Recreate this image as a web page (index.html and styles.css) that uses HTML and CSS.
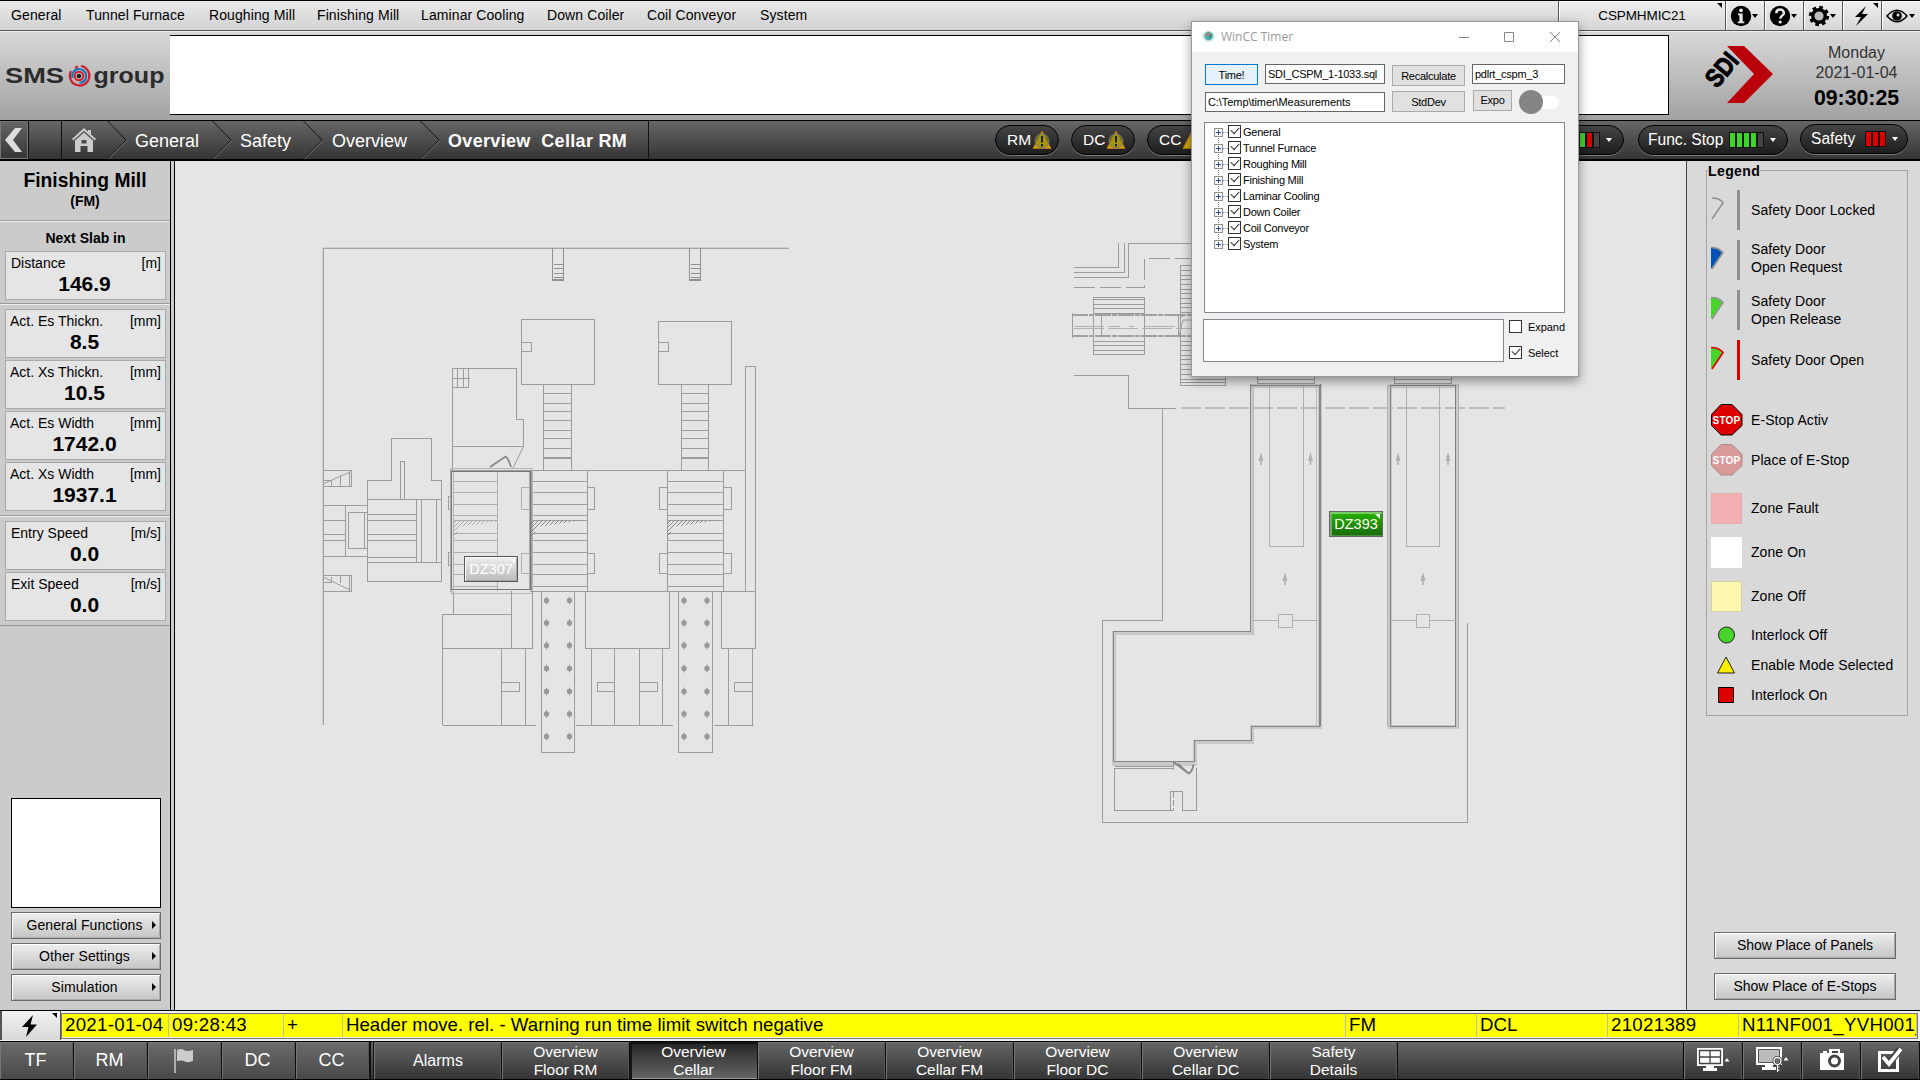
FILE: index.html
```html
<!DOCTYPE html>
<html lang="en">
<head>
<meta charset="utf-8">
<title>Overview Cellar RM</title>
<link rel="stylesheet" href="styles.css">
</head>
<body>
<div class="screen">
  <header class="menubar">
    <nav class="menu">
      <span>General</span><span>Tunnel Furnace</span><span>Roughing Mill</span><span>Finishing Mill</span><span>Laminar Cooling</span><span>Down Coiler</span><span>Coil Conveyor</span><span>System</span>
    </nav>
    <div class="tool station">CSPMHMIC21<i class="corner"></i></div>
    <div class="tool"><svg width="36" height="28" viewBox="0 0 36 28"><circle cx="15" cy="14" r="10.2"/><g fill="#e6e6e6"><circle cx="15" cy="8.3" r="1.9"/><path d="M12 11.5h4.7v8h1.6v1.7h-6.5v-1.7h1.6v-6.3H12z"/></g><path d="M26 12h6l-3 4z"/></svg></div>
    <div class="tool"><svg width="36" height="28" viewBox="0 0 36 28"><circle cx="15" cy="14" r="10.2"/><path d="M11.3 11.3c0-5.2 7.6-4.8 7.6-.4 0 2.8-3.6 2.7-3.6 5.8" fill="none" stroke="#e6e6e6" stroke-width="2.5"/><circle cx="15.2" cy="20" r="1.6" fill="#e6e6e6"/><path d="M26 12h6l-3 4z"/></svg></div>
    <div class="tool"><svg width="36" height="28" viewBox="0 0 36 28"><circle cx="15" cy="14" r="8.7" fill="none" stroke="#000" stroke-width="3" stroke-dasharray="3.6 3.23"/><circle cx="15" cy="14" r="6.3" fill="#bbb" stroke="#000" stroke-width="3.4"/><path d="M26 12h6l-3 4z"/></svg></div>
    <div class="tool"><svg width="36" height="28" viewBox="0 0 36 28"><path d="M23 4l-11 11 6 0-5 9 12-12-6 0z"/></svg><i class="corner"></i></div>
    <div class="tool"><svg width="36" height="28" viewBox="0 0 36 28"><path d="M5 14q10-11.500 20 0q-10 11.500-20 0z" fill="none" stroke="#000" stroke-width="1.600"/><circle cx="15" cy="14" r="4.800"/><circle cx="16" cy="13" r="1.500" fill="#ddd"/><path d="M27 12h6l-3 4z"/></svg></div>
  </header>

  <section class="banner">
    <div class="brand"><svg width="170" height="88" viewBox="0 32 170 88">
      <g class="brand-text"><text x="5" y="83" textLength="59" lengthAdjust="spacingAndGlyphs">SMS</text><text x="93.500" y="83" textLength="71" lengthAdjust="spacingAndGlyphs">group</text></g>
      <g fill="none" stroke-width="2.200"><path d="M81 66a9.800 9.800 0 1 1-10 5M75 68a9.500 9.500 0 0 1 3-1.500" stroke="#d0202e"/><path d="M72.500 78a7 7 0 1 1 7 5" stroke="#1b74b8"/><circle cx="79" cy="76" r="4.300" stroke="#d0202e" stroke-width="2"/></g><circle cx="79" cy="76" r="2.300" fill="#222"/></svg></div>
    <div class="message"></div>
    <div class="sdi"><svg width="98" height="80" viewBox="1690 35 98 80"><path d="M1727 46h17l29 28-29 29h-17l27-29z" fill="#b9000b"/><text x="0" y="0" transform="translate(1717 89) rotate(-50)" textLength="36" lengthAdjust="spacingAndGlyphs" class="sdi-text">SDI</text></svg></div>
    <div class="clock"><span>Monday</span><span>2021-01-04</span><b>09:30:25</b></div>
  </section>

  <nav class="crumbs">
    <div class="back"><svg width="27" height="38" viewBox="0 0 27 38"><path d="M14 7h7l-9 12 9 12h-7L4 19z" fill="#ddd"/></svg></div>
    <div class="gap"></div>
    <div class="home"><svg width="26" height="26" viewBox="0 0 26 26"><path d="M1 12L13 1l4 3.800V3h3v4.500l5 4.500-1.200 1.500L13 3.800 2.200 13.500zM4 13.500l9-8 9 8V25h-5.500v-6h-7v6H4zM10.500 13v3.500h5V13z" fill="#ccc" fill-rule="evenodd"/></svg></div>
    <svg class="chev" viewBox="0 0 20 38"><path d="M.5 0L19 19 .5 38" fill="none" stroke="#161616"/><path d="M1 38.500L20 19.500" stroke="#777"/></svg>
    <span class="crumb c1">General</span>
    <svg class="chev" viewBox="0 0 20 38"><path d="M.5 0L19 19 .5 38" fill="none" stroke="#161616"/><path d="M1 38.500L20 19.500" stroke="#777"/></svg>
    <span class="crumb c2">Safety</span>
    <svg class="chev" viewBox="0 0 20 38"><path d="M.5 0L19 19 .5 38" fill="none" stroke="#161616"/><path d="M1 38.500L20 19.500" stroke="#777"/></svg>
    <span class="crumb c3">Overview</span>
    <svg class="chev" viewBox="0 0 20 38"><path d="M.5 0L19 19 .5 38" fill="none" stroke="#161616"/><path d="M1 38.500L20 19.500" stroke="#777"/></svg>
    <span class="crumb c4">Overview&nbsp; Cellar RM</span>
    <div class="pills">
      <div class="pill warn">RM<svg width="20" height="20" viewBox="0 0 20 20"><path d="M10 1L19 18.500H1z" fill="#c8a800" stroke="#b86f1c"/><circle cx="10" cy="11" r="7" fill="#8d8b14" fill-opacity=".6" stroke="#777"/><path d="M10 6v6.500M10 14v2.500" stroke="#222" stroke-width="2"/></svg></div>
      <div class="pill warn">DC<svg width="20" height="20" viewBox="0 0 20 20"><path d="M10 1L19 18.500H1z" fill="#c8a800" stroke="#b86f1c"/><circle cx="10" cy="11" r="7" fill="#8d8b14" fill-opacity=".6" stroke="#777"/><path d="M10 6v6.500M10 14v2.500" stroke="#222" stroke-width="2"/></svg></div>
      <div class="pill warn">CC<svg width="20" height="20" viewBox="0 0 20 20"><path d="M10 1L19 18.500H1z" fill="#c8a800" stroke="#b86f1c"/></svg></div>
      <div class="pill estop"><i class="led g"></i><i class="led g"></i><i class="led r"></i><i class="led"></i><i class="dd"></i></div>
      <div class="pill func"><span>Func. Stop</span><i class="led g"></i><i class="led g"></i><i class="led g"></i><i class="led g"></i><i class="led"></i><i class="dd"></i></div>
      <div class="pill safe"><span>Safety</span><i class="led r"></i><i class="led r"></i><i class="led r"></i><i class="dd"></i></div>
    </div>
  </nav>

  <main class="work">
    <aside class="left">
      <div class="unit"><b>Finishing Mill</b><small>(FM)</small></div>
      <div class="group first">
        <h3>Next Slab in</h3>
        <div class="meas in"><span>Distance</span><span>[m]</span><b>146.9</b></div>
      </div>
      <div class="group">
        <div class="meas"><span>Act. Es Thickn.</span><span>[mm]</span><b>8.5</b></div>
        <div class="meas"><span>Act. Xs Thickn.</span><span>[mm]</span><b>10.5</b></div>
        <div class="meas"><span>Act. Es Width</span><span>[mm]</span><b>1742.0</b></div>
        <div class="meas"><span>Act. Xs Width</span><span>[mm]</span><b>1937.1</b></div>
      </div>
      <div class="group">
        <div class="meas in"><span>Entry Speed</span><span>[m/s]</span><b>0.0</b></div>
        <div class="meas in"><span>Exit Speed</span><span>[m/s]</span><b>0.0</b></div>
      </div>
      <div class="preview"></div>
      <div class="btn arrow">General Functions</div>
      <div class="btn arrow">Other Settings</div>
      <div class="btn arrow">Simulation</div>
    </aside>

    <section class="canvas">
      <svg class="plan" width="1511" height="849" viewBox="175 161 1511 849" fill="none" stroke="#9c9c9c">
        <defs>
          <pattern id="hatch" width="4" height="4" patternUnits="userSpaceOnUse"><path d="M0 4L4 0M-1 1L1-1M3 5L5 3" stroke="#777" stroke-width=".9"/></pattern>
          <path id="slats" d="M0 481.500h56.500M0 492.500h56.500M0 504.500h56.500M0 515.500h56.500M0 520.500h56.500M0 533.500h56.500M0 540.500h56.500M0 552.500h56.500M0 564.500h56.500M0 574.500h56.500M0 586.500h56.500M.5 470v121M56.500 470v121"/>
          <path id="wedge" d="M0 520.500h50L6 527 1 540z" fill="url(#hatch)" stroke="none"/>
          <path id="rungs" d="M0 393.500h28M0 403.500h28M0 411.500h28M0 420.500h28M0 430.500h28M0 438.500h28M0 448.500h28M0 457.500h28M0 458.500h28"/>
          <g id="dots" fill="#999" stroke="none"><circle cx="-.5" cy="0" r="2.700"/><circle cx="22.500" cy="0" r="2.700"/><path d="M-1-4h1v8h-1zM22-4h1v8h-1z"/></g>
          <path id="post" d="M-1.500 0L0-5 1.500 0zM0 0v5" stroke-width="1.400"/>
        </defs>
        <g shape-rendering="crispEdges">
          <path d="M789 248.500H323.500V725" stroke="#a5a5a5"/><path d="M789 247.500H322.500V725" stroke="#cfcfcf"/>
          <path d="M552.500 248v32h11v-32M553.500 264.500h10M553.500 268.500h10M553.500 273.500h10M553.500 277.500h10M689.500 248v32h11v-32M690.500 264.500h10M690.500 268.500h10M690.500 273.500h10M690.500 277.500h10" stroke="#909090" stroke-width="1.400"/>
          <path d="M521.500 319.500h73v65h-73zM658.500 321.500h73v63h-73zM521.500 342.500h10v9h-10M658.500 342.500h10v9h-10"/>
          <path d="M543.500 384.500v86M571.500 384.500v86M681.500 384.500v86M708.500 384.500v86"/>
          <use href="#rungs" x="543.500"/><use href="#rungs" x="681"/>
          <path d="M745.500 591V366.500h10V648.500"/>
          <path d="M452.500 470V368.500h64v51h7v27h-71M452.500 387.500h16v-19M457.500 368v19M463.500 368v19M453 378.500h17M453.500 591v24"/>
          <path d="M451 470.500h295M530 591.500h226"/>
          <path d="M323 470.500h28.500v16H323M349.500 471v15M323 480.500h8.500v6M340.500 475v11M323 575.500h28.500v16H323M349.500 576v15M323 582.500h8.500v-6M340.500 576v7"/>
          <path d="M367.500 581.500v-101h24v-42h40v42h10v101zM400.500 499.500v-38h4v38M367.500 499.500h74M416.500 499.500v62M421.500 499.500v62M436.500 499.500v62M367.500 514.500h49M367.500 520.500h49M367.500 534.500h49M367.500 540.500h49M367.500 557.500h49M367.500 562.500h74"/>
          <path d="M323 505.500h44.500M323 556.500h44.500M345.500 505.500v51M323 520.500h22M323 534.500h22M323 540.500h22M367.500 512.500h-19v36h19M364.500 512v36"/>
          <g stroke="#b0b0b0"><path d="M497.500 470v121M454 481.500h43M454 492.500h43M454 504.500h43M454 515.500h43M454 520.500h43M454 533.500h43M454 540.500h43M454 552.500h43M454 564.500h43M454 574.500h43M454 586.500h43M530 487.500h-8.500v22h8.500M530 553.500h-8.500v20h8.500M453.500 470v120"/></g>
          <use href="#slats" x="530.500"/><use href="#slats" x="666.500"/>
          <path d="M587.500 487.500h7v22h-7M587.500 553.500h7v20h-7M666.500 487.500h-7v22h7M666.500 553.500h-7v20h7M723.500 487.500h8v22h-8M723.500 553.500h8v20h-8M451 496.500h-2.500v13h2.500M451 552.500h-2.500v13h2.500"/>
          <path d="M451 468.500h81v125h-81z" stroke="#b5b5b5"/><path d="M451.500 471.500h79v118h-79z" stroke="#777"/><path d="M450.500 469v123M529.500 472v117" stroke="#aaa"/>
          <path d="M442.500 725V614.500h69M511.500 591v57.500M532.500 591v57.500h-90M442.500 725.500H536M501.500 648.500V725M525.500 648.500V725M501.500 682.500h18v9h-18"/>
          <path d="M541.500 591v161h33V591M678.500 591v161h34V591"/>
          <path d="M585.500 591v57.500h84V591M591.500 648.500V725M614.500 648.500V725M639.500 648.500V725M662.500 648.500V725M576 725.500h97M614.500 682.500h-17v9h17M639.500 682.500h18v9h-18M721.500 591v57.500h34M728.500 648.500V725M752.500 648.500V725M713.500 725.500h40M752.500 682.500h-18v9h18"/>
        </g>
        <path d="M323 484l27-12M323 577l27 13M523.500 446.500L512.500 469"/>
        <use href="#wedge" x="453" opacity=".6"/><use href="#wedge" x="531"/><use href="#wedge" x="667"/>
        <path d="M490 467l15.500-10.500q3 2 5.500 10.500" stroke="#888" stroke-width="1.800"/>
        <g>
          <use href="#dots" x="547" y="600.500"/><use href="#dots" x="547" y="623"/><use href="#dots" x="547" y="645.500"/><use href="#dots" x="547" y="668.500"/><use href="#dots" x="547" y="691.500"/><use href="#dots" x="547" y="714"/><use href="#dots" x="547" y="736.500"/>
          <use href="#dots" x="684.500" y="600.500"/><use href="#dots" x="684.500" y="623"/><use href="#dots" x="684.500" y="645.500"/><use href="#dots" x="684.500" y="668.500"/><use href="#dots" x="684.500" y="691.500"/><use href="#dots" x="684.500" y="714"/><use href="#dots" x="684.500" y="736.500"/>
        </g>
        <g shape-rendering="crispEdges">
          <path d="M1074 267.500h44.500V243M1074 272.500h50.500V243M1074 277.500h54.500v-34H1200"/>
          <path d="M1074 287.500h70.500v-29H1200" stroke-dasharray="21 5"/>
          <path d="M1093.500 297.500h51v57h-51zM1093 299.500h51M1093 304.500h51M1093 308.500h51M1093 313.500h51M1093 341.500h51M1093 345.500h51M1093 350.500h51"/>
          <path d="M1072.500 313v25M1101.500 315v21M1178.500 315v21"/>
          <path d="M1072 315h120M1072 336h120" stroke="#a0a0a0" stroke-width="2" stroke-dasharray="16 1 5 1"/>
          <path d="M1074 326.500h46M1129 326.500h5M1145 326.500h32M1074 328.500h118" stroke="#b2b2b2" stroke-dasharray="30 4"/>
          <path d="M1180.500 265.500h20M1180.500 265v120.500h44.500v-12M1181 270.500h20M1181 275.500h20M1181 279.500h20M1181 284.500h20M1181 289.500h20M1181 293.500h20M1181 298.500h20M1181 303.500h20M1181 307.500h20M1181 312.500h20M1181 341.500h20M1181 345.500h20M1181 350.500h20M1181 355.500h20M1181 359.500h20M1181 364.500h20M1181 369.500h20M1181 374.500h20M1181 379.500h44M1181 382.500h44"/>
          <path d="M1074 375.500h54.500v32.500H1176"/>
          <path d="M1181 408H1505" stroke="#bcbcbc" stroke-width="2" stroke-dasharray="20 4"/>
          <path d="M1162.500 408v212.500h-60v202h365V623"/>
          <path d="M1257.500 374v11h57v-11M1258 379.500h56M1258 383.500h56M1394.500 374v11h57v-11M1395 379.500h56M1395 383.500h56"/>
          <g>
            <path d="M1251.500 385.500h68V726.500h-68v15h-57v22h-81v-131h138z" stroke="#c9c9c9" stroke-width="4"/>
            <path d="M1250.500 385.500h70M1250.500 384v247.500h-137v130h81v-21h57v-14h67.500V386M1320.500 384v342" stroke="#868686"/>
            <path d="M1316.500 386v340M1253.500 386v248.500" stroke="#bbb"/>
            <path d="M1389.500 385.500h67V726.500h-67z" stroke="#c9c9c9" stroke-width="4"/>
            <path d="M1390.500 385.500h65V726.500h-65z" stroke="#7f7f7f"/><path d="M1387.500 385v341.500M1458.500 385v341.500" stroke="#b2b2b2"/>
          </g>
          <path d="M1269.500 386v160.500h34V386M1406.500 386v160.500h33V386M1253 620.500h25M1293 620.500h25M1391 620.500h25M1430 620.500h26M1278.500 614h14v13.500h-14zM1416.500 614h13v13.500h-13z" stroke="#b0b0b0"/>
          <path d="M1173.500 768.500h-59.500v42h60M1170.500 810v-18.500h12v19h14V768M1173.500 762v8M1115 766.500h58" />
          <path d="M1173.500 792v18" stroke-dasharray="6 2"/>
        </g>
        <path d="M1179 336l4-16h10M1180 318l3-2"/>
        <path d="M1173.500 762l15 11.500q4-2 5-9M1188 773l-10-9" stroke="#888" stroke-width="1.800"/>
        <g stroke="#aaa"><use href="#post" x="1261" y="460"/><use href="#post" x="1310.500" y="460"/><use href="#post" x="1398" y="460"/><use href="#post" x="1448" y="460"/><use href="#post" x="1285" y="580"/><use href="#post" x="1423" y="580"/></g>
      </svg>
      <div class="tag off">DZ307</div>
      <div class="tag on">DZ393</div>
    </section>

    <aside class="right">
      <div class="legend">
        <b class="legend-title">Legend</b>
        <div class="row door"><svg width="31" height="44" viewBox="0 0 31 44"><path d="M1 10q8 0 11 5L1 31" fill="none" stroke="#8e8e8e" stroke-width="1.500"/><path d="M27.500 2v40" stroke="#8e8e8e" stroke-width="3"/></svg><span>Safety Door Locked</span></div>
        <div class="row door request"><svg width="31" height="44" viewBox="0 0 31 44"><path d="M0 10q8 0 11 5L0 31z" fill="#0050b8"/><path d="M0 9.500q8 0 12 5L1 31" fill="none" stroke="#8e8e8e" stroke-width="1.500"/><path d="M27.500 2v40" stroke="#8e8e8e" stroke-width="3"/></svg><span>Safety Door<br>Open Request</span></div>
        <div class="row door"><svg width="31" height="44" viewBox="0 0 31 44"><path d="M0 10q8 0 11 5L0 31z" fill="#47d52c"/><path d="M0 9.500q8 0 12 5L1 31" fill="none" stroke="#8e8e8e" stroke-width="1.500"/><path d="M27.500 2v40" stroke="#8e8e8e" stroke-width="3"/></svg><span>Safety Door<br>Open Release</span></div>
        <div class="row door"><svg width="31" height="44" viewBox="0 0 31 44"><path d="M0 10q8 0 11 5L0 31z" fill="#47d52c"/><path d="M0 9.500q8 0 12 5L1 31" fill="none" stroke="#dc0000" stroke-width="1.700"/><path d="M27.500 2v40" stroke="#dc0000" stroke-width="3"/></svg><span>Safety Door Open</span></div>
        <div class="row stop first-stop"><svg width="32" height="32" viewBox="0 0 32 32"><path d="M10 .5h11l10 10v11l-10 9.500H10L.5 21.500v-11z" fill="#dc0000" stroke="#000"/><text x="15.500" y="19.500">STOP</text></svg><span>E-Stop Activ</span></div>
        <div class="row stop"><svg width="32" height="32" viewBox="0 0 32 32"><path d="M10 .5h11l10 10v11l-10 9.500H10L.5 21.500v-11z" fill="#d99a9a" stroke="#a88"/><text x="15.500" y="19.500">STOP</text></svg><span>Place of E-Stop</span></div>
        <div class="row zone z1"><i class="fault"></i><span>Zone Fault</span></div>
        <div class="row zone z2"><i class="on"></i><span>Zone On</span></div>
        <div class="row zone z3"><i class="offz"></i><span>Zone Off</span></div>
        <div class="row lock"><svg width="31" height="20" viewBox="0 0 31 20"><circle cx="15.500" cy="10" r="8" fill="#47d52c" stroke="#222"/></svg><span>Interlock Off</span></div>
        <div class="row lock"><svg width="31" height="20" viewBox="0 0 31 20"><path d="M15 2l8.500 16h-17z" fill="#ffed00" stroke="#222"/></svg><span>Enable Mode Selected</span></div>
        <div class="row lock"><svg width="31" height="20" viewBox="0 0 31 20"><path d="M7.500 2.500h15v15h-15z" fill="#dc0000" stroke="#000"/></svg><span>Interlock On</span></div>
      </div>
      <div class="btn wide">Show Place of Panels</div>
      <div class="btn wide">Show Place of E-Stops</div>
    </aside>
  </main>

  <section class="alarm">
    <div class="ack"><svg width="16" height="22" viewBox="0 0 16 22"><path d="M11 0L0 12h6.500L4 22 15 9.500H8.500z"/></svg><i class="corner"></i></div>
    <div class="alarm-row">
      <span class="num">2021-01-04</span><span class="num">09:28:43</span><span>+</span><span>Header move. rel. - Warning run time limit switch negative</span><span>FM</span><span>DCL</span><span class="num">21021389</span><span class="num">N11NF001_YVH001_</span>
    </div>
  </section>

  <footer class="tabs">
    <div class="key">TF</div><div class="key">RM</div><div class="key"><svg width="20" height="24" viewBox="0 0 20 24"><path d="M1 0v24" stroke="#ccc" stroke-width="1.500"/><path d="M3 1q4-2 7 0t9 0v11q-5 2-8 .5T3 12z" fill="#ccc"/></svg></div><div class="key">DC</div><div class="key">CC</div>
    <div class="tab alarms">Alarms</div>
    <div class="tab">Overview<br>Floor RM</div>
    <div class="tab active">Overview<br>Cellar</div>
    <div class="tab">Overview<br>Floor FM</div>
    <div class="tab">Overview<br>Cellar FM</div>
    <div class="tab">Overview<br>Floor DC</div>
    <div class="tab">Overview<br>Cellar DC</div>
    <div class="tab">Safety<br>Details</div>
    <div class="filler"></div>
    <div class="util"><svg width="34" height="24" viewBox="0 0 34 24"><path d="M0 0h26v18H0z" fill="#fff"/><path d="M2.500 2.500h21v13h-21zM13 2.500v13M2.500 9h21" fill="none" stroke="#444" stroke-width="1.300"/><path d="M9 18h8v2h3v3H6v-3h3z" fill="#fff"/><path d="M27.500 13.500h5L30 10z" fill="#fff"/></svg></div>
    <div class="util"><svg width="34" height="26" viewBox="0 0 34 26"><path d="M0 0h26v18H0z" fill="#fff"/><path d="M2.500 2.500h21v13h-21z" fill="#bbb" stroke="#555"/><path d="M9 18h8v2h3v3H6v-3h3z" fill="#fff"/><path d="M21.500 16v9m0-5h3m-3 3h3" stroke="#444" stroke-width="3"/><circle cx="21.500" cy="14" r="3.500" fill="#777" stroke="#444" stroke-width="3"/><circle cx="21.500" cy="14" r="3.500" fill="none" stroke="#fff" stroke-width="1.300"/><path d="M21.500 17v8m0-5h2m-2 3h2" stroke="#fff"/><path d="M27.500 13.500h5L30 10z" fill="#fff"/></svg></div>
    <div class="util"><svg width="24" height="22" viewBox="0 0 24 22"><path d="M0 4h3V2h4v2h2V0h11v4h4v17H0z" fill="#fff"/><path d="M12 2h6v2h-6z" fill="#444"/><circle cx="14.500" cy="12" r="5" fill="#fff" stroke="#444" stroke-width="3"/></svg></div>
    <div class="util"><svg width="25" height="26" viewBox="0 0 25 26"><path d="M1.500 5.500h18v18h-18z" fill="none" stroke="#fff" stroke-width="3"/><path d="M6 11l5 6L22 2" fill="none" stroke="#444" stroke-width="7"/><path d="M5 10l6 7L23 2" fill="none" stroke="#fff" stroke-width="3.800"/></svg></div>
  </footer>

  <div class="dialog">
    <div class="titlebar">
      <svg width="13" height="13" viewBox="0 0 13 13"><path d="M6 0l5 3 2 4-3 4-5 1-4-3-1-4z" fill="#c5e5de"/><circle cx="6.500" cy="6" r="4.200" fill="#55b0a8"/><path d="M3 5l4-3v4z" fill="#c9756a"/><path d="M7 6l3-3v4l-3 3z" fill="#468c8f"/></svg>
      <span>WinCC Timer</span>
      <svg class="win" width="102" height="12" viewBox="0 0 102 12" fill="none" stroke="#888"><path d="M0 6.500h10M45.500 1.500h9v9h-9zM91 1l10 10M101 1L91 11"/></svg>
    </div>
    <div class="form">
      <div class="button primary">Time!</div><div class="field">SDI_CSPM_1-1033.sql</div><div class="button low">Recalculate</div><div class="field">pdlrt_cspm_3</div>
    </div>
    <div class="form second">
      <div class="field path">C:\Temp\timer\Measurements</div><div class="button std">StdDev</div><div class="button expo">Expo</div><div class="toggle"></div>
    </div>
    <div class="tree">
      <div class="node"><i class="plus"></i><i class="check"></i>General</div>
      <div class="node"><i class="plus"></i><i class="check"></i>Tunnel Furnace</div>
      <div class="node"><i class="plus"></i><i class="check"></i>Roughing Mill</div>
      <div class="node"><i class="plus"></i><i class="check"></i>Finishing Mill</div>
      <div class="node"><i class="plus"></i><i class="check"></i>Laminar Cooling</div>
      <div class="node"><i class="plus"></i><i class="check"></i>Down Coiler</div>
      <div class="node"><i class="plus"></i><i class="check"></i>Coil Conveyor</div>
      <div class="node"><i class="plus"></i><i class="check"></i>System</div>
    </div>
    <div class="bottom">
      <div class="output"></div>
      <div class="options"><div><i class="check empty"></i>Expand</div><div><i class="check"></i>Select</div></div>
    </div>
  </div>
</div>
</body>
</html>
```
FILE: styles.css
```css
* { box-sizing: border-box; }
body { margin: 0; font: 14px "Liberation Sans", Arial, sans-serif; color: #000; background: #cbcbcb; }
svg { display: block; flex: none; }
.screen { position: relative; width: 1920px; height: 1080px; overflow: hidden; display: flex; flex-direction: column; white-space: nowrap; }

.menubar { height: 31px; flex: none; display: flex; border-top: 1px solid #000; border-bottom: 1px solid #555; background: linear-gradient(#e9e9e9, #d2d2d2); }
.menu { flex: 1; display: grid; grid-template-columns: 75px 123px 108px 104px 126px 100px 113px 60px; align-items: center; padding: 0 0 1px 11px; letter-spacing: .1px; }
.tool { position: relative; width: 39px; display: flex; align-items: center; border-left: 1px solid #555; box-shadow: inset 1px 1px 0 #fff; background: linear-gradient(#eee, #d6d6d6); }
.tool svg { position: relative; }
.station { width: 167px; justify-content: center; font-size: 13.5px; letter-spacing: -.1px; padding-right: 0; }
.corner { position: absolute; top: 2px; right: 3px; width: 0; height: 0; border-top: 5px solid #000; border-left: 5px solid transparent; }

.banner { height: 89px; flex: none; display: flex; background: linear-gradient(#d8d8d8, #a2a2a2); border-top: 1px solid #eee; }
.brand { width: 170px; flex: none; }
.brand-text { font: bold 22px "Liberation Sans", Arial, sans-serif; fill: #2b2b2b; }
.message { width: 1499px; flex: none; height: 80px; margin-top: 3px; background: #fff; border: solid #000; border-width: 1px 1px 1px 0; }
.sdi { width: 121px; flex: none; padding: 3px 0 0 21px; }
.sdi-text { font: bold 26px "Liberation Sans", Arial, sans-serif; fill: #000; stroke: #000; stroke-width: 1px; }
.clock { flex: 1; display: flex; flex-direction: column; align-items: center; padding: 11px 0 0 3px; font-size: 16px; line-height: 20px; color: #333; }
.clock b { font-size: 21.3px; line-height: 31px; color: #000; }

.crumbs { height: 41px; flex: none; display: flex; border-top: 1px solid #000; border-bottom: 2px solid #000; background: linear-gradient(#666, #353535); color: #fff; font-size: 18px; }
.back { width: 29px; padding-left: 1px; border-right: 1px solid #111; box-shadow: inset 0 0 0 1px #777; }
.gap { width: 33px; border-right: 1px solid #111; }
.home { width: 45px; padding: 6px 0 0 9px; }
.chev { width: 20px; height: 38px; }
.crumb { line-height: 40px; padding-left: 8px; }
.c1 { width: 85px; }
.c2 { width: 71px; }
.c3 { width: 97px; padding-left: 9px; }
.c4 { width: 209px; padding-left: 8px; font-weight: bold; font-size: 18px; letter-spacing: .32px; border-right: 1px solid #111; }
.pills { flex: 1; display: flex; align-items: center; margin-left: 346px; height: 37px; font-size: 16px; }
.pill { flex: none; height: 30px; border-radius: 15px; border: 1px solid #000; box-shadow: 0 1px 0 #777; background: linear-gradient(#444, #1d1d1d); display: flex; align-items: center; }
.warn { width: 64px; margin-right: 12px; padding-left: 11px; font-size: 15.5px; gap: 1px; }
.estop { width: 90px; margin-left: 311px; padding-left: 38px; gap: 2px; }
.func { width: 150px; margin-left: 14px; padding-left: 9px; gap: 2px; font-size: 15.6px; }
.safe { width: 108px; margin-left: 12px; padding-left: 10px; gap: 2px; font-size: 15.6px; margin-top: -2px; }
.pill span { width: 80px; }
.safe span { width: 53px; }
.led { width: 5px; height: 14px; background: #444; outline: 1px solid #111; }
.led.g { background: #3fd42c; }
.led.r { background: #dc0000; }
.dd { margin-left: 5px; border: solid transparent; border-width: 4px 3.5px 0; border-top-color: #fff; }

.work { flex: 1; min-height: 0; display: flex; }
.left { width: 171px; flex: none; background: #cbcbcb; border-right: 1px solid #000; display: flex; flex-direction: column; }
.unit { height: 60px; display: flex; flex-direction: column; align-items: center; padding: 9px 0 0; border-bottom: 1px solid #999; }
.unit b { font-size: 19.3px; line-height: 21px; }
.unit small { font-size: 14px; font-weight: bold; line-height: 20px; }
.group { border-top: 1px solid #eee; border-bottom: 1px solid #999; padding: 4px 4px 4px 5px; display: flex; flex-direction: column; gap: 2px; }
.group.first { padding-top: 6px; padding-bottom: 3px; }
h3 { margin: 0; font-size: 14px; line-height: 21px; text-align: center; }
.meas { height: 49px; border: 1px solid #aaa; background: #e5e5e5; padding: 3px 4px 0; display: flex; flex-wrap: wrap; justify-content: space-between; align-content: flex-start; line-height: 16px; }
.meas.in { padding-left: 5px; }
.meas b { width: 100%; text-align: center; font-size: 21px; line-height: 26px; padding-right: 2px; }
.meas.in b { padding-right: 3px; }
.preview { width: 150px; height: 110px; margin: auto 0 4px 11px; border: 1px solid #000; background: #fff; }
.btn { flex: none; border: 1px solid #6b6b6b; box-shadow: inset 1px 1px 0 #fff, inset -1px -1px 0 #aaa; background: linear-gradient(#eee, #c5c5c5); height: 27px; line-height: 25px; text-align: center; }
.arrow { position: relative; width: 150px; margin: 0 0 4px 11px; padding-right: 3px; letter-spacing: .1px; }
.arrow:last-child { margin-bottom: 9px; }
.arrow::after { content: ""; position: absolute; right: 4px; top: 8px; border: solid transparent; border-width: 4px 0 4px 4px; border-left-color: #000; }

.canvas { position: relative; width: 1516px; flex: none; padding-left: 3px; background: #e5e5e5; border-right: 1px solid #444; }
.canvas::before { content: ""; position: absolute; left: 0; top: 0; bottom: 0; width: 3px; background: #ccc; border-right: 1px solid #000; }
.plan { margin-left: 1px; }
.tag { position: absolute; width: 54px; height: 26px; border: 1px solid #555; text-align: center; font-size: 14.5px; line-height: 25px; color: #fff; }
.tag::after { content: ""; position: absolute; right: 2px; top: 2px; border-top: 5px solid #fff; border-left: 5px solid transparent; }
.off { left: 293px; top: 395px; background: linear-gradient(#eee, #bbb); box-shadow: inset 1px 1px 0 #fff, inset -1px -1px 0 #aaa; }
.on.tag { left: 1158px; top: 350px; background: linear-gradient(#24b400, #1c6a0e); box-shadow: inset 0 2px 0 #78cc66, inset 2px 0 0 #78aa70, inset 0 -1px 0 #489040; border-color: #666; }

.right { flex: 1; background: #d9d9d9; padding: 9px 12px 0 19px; display: flex; flex-direction: column; }
.legend { position: relative; flex: none; height: 546px; border: 1px solid #a5a5a5; padding: 14px 0 0 4px; margin-bottom: 216px; }
.legend-title { position: absolute; left: 1px; top: -8px; background: #d9d9d9; line-height: 16px; letter-spacing: .4px; }
.row { display: flex; align-items: center; gap: 9px; line-height: 18px; letter-spacing: .07px; }
.door { height: 50px; }
.request span { position: relative; top: -2px; }
.stop { height: 40px; gap: 8px; }
.first-stop { margin-top: 15px; }
.stop text { font: bold 10px "Liberation Sans", Arial, sans-serif; fill: #fff; text-anchor: middle; letter-spacing: .2px; }
.zone { height: 31px; }
.zone i { width: 31px; height: 31px; border: 1px solid #bbb; }
.zone span { position: relative; top: -1px; }
.z1 { margin-top: 13px; }
.z2, .z3 { margin-top: 13px; }
.zone .fault { background: #f3b0b2; border-color: #ddb0b0; }
.zone .on { background: #fff; border-color: #fff; }
.zone .offz { background: #fdf8b0; border-color: #d5d0a8; }
.lock { height: 30px; }
.z3 { margin-bottom: 8px; }
.wide { width: 182px; margin: 0 0 14px 8px; }

.alarm { height: 31px; flex: none; display: flex; background: #f0f0f0; border-top: 1px solid #000; padding-bottom: 1px; }
.ack { position: relative; width: 61px; border-left: 2px solid #555; border-right: 1px solid #555; padding: 4px 0 0 20px; background: linear-gradient(#f2f2f2, #d8d8d8); }
.alarm-row { display: grid; grid-template-columns: 107px 115px 59px 1003px 131px 131px 131px 178px; margin-top: 2px; height: 26px; border: 1px solid #777; width: 1857px; font-size: 18.67px; line-height: 22px; }
.alarm-row span { background: #ff0; border-right: 1px solid #bbb; padding-left: 3px; height: 23px; overflow: hidden; }
.alarm-row .num { letter-spacing: .3px; }

.tabs { height: 39px; flex: none; display: flex; border-top: 1px solid #000; border-bottom: 1px solid #000; color: #fff; background: linear-gradient(#666, #343434); }
.key, .tab, .util { flex: none; border-right: 1px solid #0c0c0c; box-shadow: inset 1px 1px 0 #777, inset -1px 0 0 #555; display: flex; align-items: center; justify-content: center; text-align: center; }
.key { width: 74px; font-size: 18px; background: linear-gradient(#6c6c6c, #484848); padding-right: 2px; }
.tab { width: 128px; font-size: 15.5px; line-height: 18px; }
.alarms { width: 132px; padding-left: 1px; font-size: 16px; border-left: 4px double #111; }
.active { background: linear-gradient(#242424, #666); box-shadow: inset 2px 2px 0 #151515, inset 0 -1px 0 #999; }
.filler { flex: 1; border-right: 1px solid #000; }
.util { width: 59px; padding: 0 0 2px 1px; }

.dialog { position: absolute; left: 1191px; top: 21px; width: 388px; height: 356px; background: #f0f0f0; border: 1px solid #9a9a9a; box-shadow: 0 4px 10px rgba(0,0,0,.4); font-size: 11px; letter-spacing: -.25px; padding: 0 11px 0 11px; }
.titlebar { height: 30px; margin: 0 -11px; background: #fff; display: flex; align-items: center; padding: 0 17px 1px 10px; font: 12px "Open Sans", "Noto Sans", sans-serif; color: #999; letter-spacing: 0; gap: 6px; }
.win { margin-left: auto; }
.form { display: flex; margin: 12px 0 0 2px; height: 22px; }
.second { margin-top: 3px; height: 26px; }
.field { width: 120px; height: 20px; border: 1px solid #666; background: #fff; line-height: 18px; padding-left: 2px; margin: 0 7px; overflow: hidden; }
.field:last-child { width: 93px; margin-right: 0; }
.button { width: 73px; height: 22px; border: 1px solid #aaa; background: #e1e1e1; text-align: center; line-height: 20px; flex: none; }
.primary { width: 53px; height: 21px; border-color: #0078d7; background: #e5f1fb; }
.low { margin-top: 1px; height: 21px; }
.path { width: 180px; margin: 3px 7px 0 0; letter-spacing: -.07px; }
.std { margin-top: 2px; height: 21px; }
.expo { width: 39px; margin: 1px 0 0 8px; height: 21px; line-height: 19px; }
.toggle { position: relative; width: 34px; height: 13px; margin: 7px 0 0 13px; background: #fff; border-radius: 7px; }
.toggle::before { content: ""; position: absolute; left: -6px; top: -6px; width: 24px; height: 24px; border-radius: 50%; background: #858585; }
.tree { position: relative; width: 361px; height: 191px; margin: 7px 0 6px 1px; background: #fff; border: 1px solid #828790; padding: 1px 0 0 9px; }
.tree::before { content: ""; position: absolute; left: 13px; top: 10px; height: 112px; border-left: 1px dotted #888; }
.node { height: 16px; display: flex; align-items: center; }
.plus { position: relative; width: 9px; height: 9px; border: 1px solid #919191; background: linear-gradient(#2d4f9f, #2d4f9f) center/5px 1px no-repeat, linear-gradient(#2d4f9f, #2d4f9f) center/1px 5px no-repeat, #f6f6f6; margin-right: 5px; }
.plus::after { content: ""; position: absolute; left: 8px; top: 3px; width: 5px; border-top: 1px dotted #888; }
.check { position: relative; width: 13px; height: 13px; border: 1px solid #333; background: #fff; margin-right: 2px; flex: none; top: -1px; }
.check::after { content: ""; position: absolute; left: 2px; top: 1px; width: 7px; height: 4px; border: solid #333; border-width: 0 0 1.3px 1.3px; transform: rotate(-48deg); }
.empty::after { display: none; }
.bottom { display: flex; }
.output { width: 301px; height: 43px; background: #fff; border: 1px solid #828790; }
.options { display: flex; flex-direction: column; gap: 10px; margin-left: 5px; }
.options div { display: flex; align-items: center; height: 16px; gap: 4px; letter-spacing: -.05px; }
```
